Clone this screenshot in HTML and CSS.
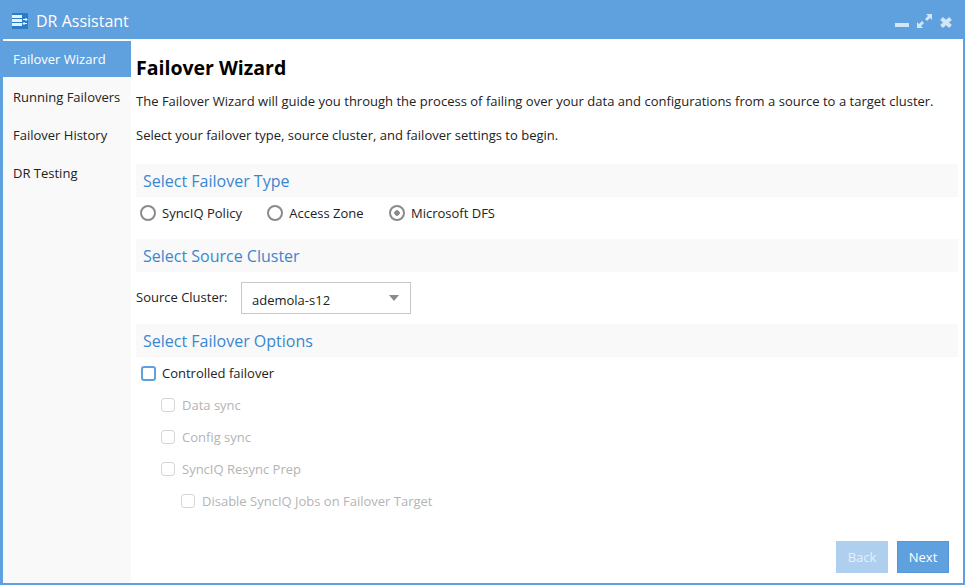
FILE: index.html
```html
<!DOCTYPE html>
<html lang="en">
<head>
    <meta charset="UTF-8">
    <title>DR Assistant</title>
    <link rel="stylesheet" href="styles.css">
</head>
<body>
    <div class="window">
        <header class="titlebar">
            <svg class="app-icon" width="16" height="16" viewBox="0 0 16 16">
                <rect width="16" height="16" fill="#2a7cc7"/>
                <path d="M0 2h10v3H0zM0 6h10v3H0zM0 10h10v3H0z" fill="#e8f2fb"/>
                <path d="M11 6.500h4M13.500 5l1.500 1.500-1.500 1.500M15 10.500h-4M12.500 9L11 10.500l1.500 1.500" stroke="#fff" stroke-width="1" fill="none"/>
            </svg>
            <span class="app-title">DR Assistant</span>
            <div class="window-tools">
                <svg width="14" height="14" viewBox="0 0 14 14"><path d="M0 9h14v4H0z" fill="#d4e6f6"/></svg>
                <svg width="15" height="14" viewBox="0 0 15 14"><path d="M9 0h6v6l-2-2-3 3-2-2 3-3zM6 14H0V8l2 2 3-3 2 2-3 3z" fill="#d4e6f6"/></svg>
                <svg width="12" height="14" viewBox="0 0 12 14"><path d="M1.500 4.500l9 8M10.500 4.500l-9 8" stroke="#d4e6f6" stroke-width="4" fill="none"/></svg>
            </div>
        </header>
        <div class="content">
            <ul class="side-nav">
                <li class="active">Failover Wizard</li>
                <li>Running Failovers</li>
                <li>Failover History</li>
                <li>DR Testing</li>
            </ul>
            <main class="wizard">
                <h1>Failover Wizard</h1>
                <p class="intro first">The Failover Wizard will guide you through the process of failing over your data and configurations from a source to a target cluster.</p>
                <p class="intro last">Select your failover type, source cluster, and failover settings to begin.</p>

                <h2>Select Failover Type</h2>
                <div class="radio-row">
                    <span class="radio-item"><span class="radio"></span>SyncIQ Policy</span>
                    <span class="radio-item"><span class="radio"></span>Access Zone</span>
                    <span class="radio-item"><span class="radio checked"></span>Microsoft DFS</span>
                </div>

                <h2>Select Source Cluster</h2>
                <div class="source-row">
                    <span class="source-label">Source Cluster:</span>
                    <div class="select"><span class="select-value">ademola-s12</span><i class="caret"></i></div>
                </div>

                <h2>Select Failover Options</h2>
                <div class="options">
                    <div class="check-row"><span class="check focus"></span>Controlled failover</div>
                    <div class="check-row disabled level1"><span class="check"></span>Data sync</div>
                    <div class="check-row disabled level1"><span class="check"></span>Config sync</div>
                    <div class="check-row disabled level1"><span class="check"></span>SyncIQ Resync Prep</div>
                    <div class="check-row disabled level2"><span class="check"></span>Disable SyncIQ Jobs on Failover Target</div>
                </div>

                <div class="buttons">
                    <button class="btn btn-off">Back</button>
                    <button class="btn">Next</button>
                </div>
            </main>
        </div>
    </div>
</body>
</html>
```

FILE: styles.css
```css
*{
    margin: 0;
    padding: 0;
    box-sizing: border-box;
}

html, body{
    height: 100%;
    overflow: hidden;
}

body{
    font-family: "Open Sans", sans-serif;
    font-size: 13px;
    color: #222;
    background-color: #fff;
}

.window{
    display: flex;
    flex-direction: column;
    height: 585px;
    border: solid #5fa0de;
    border-width: 0 2px 2px 3px;
}

.titlebar{
    display: flex;
    align-items: center;
    height: 39px;
    flex-shrink: 0;
    background-color: #5fa0de;
    margin: 0 -2px 0 -3px;
    padding: 3px 13px 0 12px;
    color: #fff;
}

.app-icon{
    margin-right: 8px;
}

.app-title{
    font-size: 16px;
}

.window-tools{
    display: flex;
    align-items: center;
    gap: 8px;
    margin-left: auto;
}

.content{
    display: flex;
    flex: 1;
    padding-top: 2px;
    min-height: 0;
}

.side-nav{
    width: 128px;
    flex-shrink: 0;
    list-style: none;
    background-color: #f9f9f9;
}

.side-nav li{
    display: flex;
    align-items: center;
    height: 36px;
    margin-bottom: 2px;
    padding-left: 10px;
}

.side-nav li.active{
    background-color: #5fa0de;
    color: #fff;
}

.wizard{
    position: relative;
    flex: 1;
    padding: 13px 5px 0;
}

h1{
    font-size: 19.500px;
    font-weight: 700;
    line-height: 27px;
    color: #000;
    margin-bottom: 11px;
}

.intro{
    line-height: 18px;
    margin-bottom: 16px;
}

.intro.first{
    word-spacing: .08px;
}

.intro.last{
    margin-bottom: 20px;
}

h2{
    height: 33px;
    line-height: 34px;
    padding-left: 7px;
    font-size: 16px;
    font-weight: 400;
    color: #3a87d0;
    background-color: #f9f9f9;
}

.radio-row{
    display: flex;
    height: 42px;
    padding: 7px 0 0 4px;
}

.radio-item{
    display: flex;
    align-items: center;
    height: 18px;
    margin-right: 25.400px;
}

.radio{
    width: 16px;
    height: 16px;
    margin-right: 6px;
    border: 2px solid #8a8a8a;
    border-radius: 50%;
    background-color: #fff;
}

.radio.checked{
    background: radial-gradient(circle, #8a8a8a 0, #8a8a8a 2.5px, #fff 3px);
}

.source-row{
    display: flex;
    align-items: center;
    height: 52px;
}

.source-label{
    width: 105px;
    margin-top: -2px;
}

.select{
    display: flex;
    align-items: center;
    justify-content: space-between;
    width: 170px;
    height: 32px;
    padding: 0 11px 0 10px;
    border: 1px solid #c8c8c8;
    background-color: #fff;
}

.select-value{
    padding-top: 3px;
}

.caret{
    width: 0;
    height: 0;
    border: solid transparent;
    border-width: 6px 5.500px 0;
    border-top-color: #8a8a8a;
}

.check-row{
    display: flex;
    align-items: center;
    height: 32px;
    padding-left: 5px;
}

.check-row.level1{
    padding-left: 25px;
}

.check-row.level2{
    padding-left: 45px;
}

.check-row.disabled{
    color: #b4b4b4;
}

.check{
    width: 14px;
    height: 14px;
    margin-right: 7px;
    border: 1px solid #d6d6d6;
    border-radius: 3px;
    background-color: #fff;
}

.check.focus{
    border: 2px solid #5fa0de;
    width: 15px;
    height: 15px;
    margin-right: 6px;
}

.buttons{
    position: absolute;
    right: 14px;
    bottom: 10px;
    display: flex;
    gap: 9px;
}

.btn{
    width: 52px;
    height: 32px;
    font-family: inherit;
    font-size: 13px;
    color: #fff;
    background-color: #5fa0de;
    border: 1px solid #5596d4;
}

.btn-off{
    background-color: #afcfee;
    border-color: #afcfee;
    color: #e4eff9;
}
```
